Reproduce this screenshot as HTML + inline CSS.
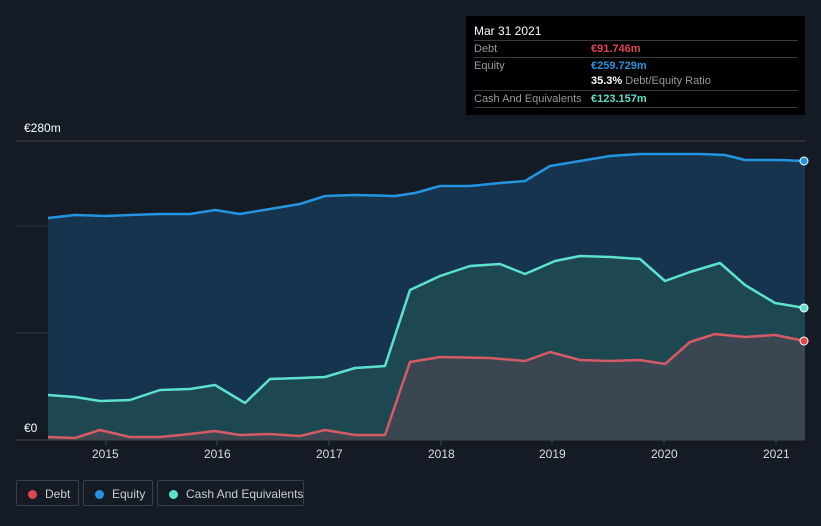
<!DOCTYPE html>
<html><head><meta charset="utf-8"><style>
body{margin:0;background:#151b24;width:821px;height:526px;overflow:hidden;font-family:"Liberation Sans",sans-serif;}
.tt{position:absolute;left:466px;top:16px;width:339px;height:99px;background:#000;color:#fff;font-size:11px;}
.tt .h{position:absolute;left:8px;top:8px;font-size:12px;}
.row{position:absolute;left:8px;width:324px;border-top:1px solid #3a3a3a;height:16px;line-height:17px;color:#999;white-space:nowrap;}
.row span{position:absolute;left:117px;font-weight:bold;}
.leg{position:absolute;top:480px;height:26px;border:1px solid #3a404a;border-radius:2px;color:#ccc;font-size:12px;line-height:26px;box-sizing:border-box;white-space:nowrap;}
.leg i{position:absolute;left:11px;top:9px;width:9px;height:9px;border-radius:50%;}
.leg b{font-weight:normal;position:absolute;left:28px;}
.lbl{position:absolute;color:#fff;font-size:12px;}
</style></head><body>
<svg width="821" height="526" style="position:absolute;left:0;top:0">
<line x1="16" y1="141" x2="805" y2="141" stroke="#444" />
<line x1="16" y1="226" x2="805" y2="226" stroke="#2a3340" />
<line x1="16" y1="333" x2="805" y2="333" stroke="#2a3340" />
<polygon fill="#17344f" points="48,218 75,215 105,216 130,215 160,214 190,214 215,210 240,214 270,209 300,204 325,196 355,195 395,196 415,193 440,186 470,186 500,183 525,181 550,166 580,161 610,156 640,154 700,154 725,155 745,160 780,160 805,161 805,440 48,440"/>
<polygon fill="#1e4a52" opacity="0.9" points="48,395 75,397 100,401 130,400 160,390 190,389 215,385 245,403 270,379 300,378 325,377 355,368 385,366 410,290 440,276 470,266 500,264 525,274 555,261 580,256 610,257 640,259 665,281 690,272 720,263 745,285 775,303 805,308 805,440 48,440"/>
<polygon fill="#3c4852" opacity="0.95" points="48,437 75,438 100,430 130,437 160,437 190,434 215,431 240,435 270,434 300,436 325,430 355,435 385,435 410,362 440,357 490,358 525,361 550,352 580,360 610,361 640,360 665,364 690,342 715,334 745,337 775,335 805,341 805,440 48,440"/>
<polyline fill="none" stroke="#2394df" stroke-width="2.5" stroke-linejoin="round" points="48,218 75,215 105,216 130,215 160,214 190,214 215,210 240,214 270,209 300,204 325,196 355,195 395,196 415,193 440,186 470,186 500,183 525,181 550,166 580,161 610,156 640,154 700,154 725,155 745,160 780,160 805,161"/>
<polyline fill="none" stroke="#5ce0cf" stroke-width="2.5" stroke-linejoin="round" points="48,395 75,397 100,401 130,400 160,390 190,389 215,385 245,403 270,379 300,378 325,377 355,368 385,366 410,290 440,276 470,266 500,264 525,274 555,261 580,256 610,257 640,259 665,281 690,272 720,263 745,285 775,303 805,308"/>
<polyline fill="none" stroke="#d45a64" stroke-width="2.5" stroke-linejoin="round" points="48,437 75,438 100,430 130,437 160,437 190,434 215,431 240,435 270,434 300,436 325,430 355,435 385,435 410,362 440,357 490,358 525,361 550,352 580,360 610,361 640,360 665,364 690,342 715,334 745,337 775,335 805,341"/>
<line x1="16" y1="440" x2="805" y2="440" stroke="#444"/>
<g stroke="#444"><line x1="106" y1="440" x2="106" y2="445"/><line x1="217" y1="440" x2="217" y2="445"/><line x1="329" y1="440" x2="329" y2="445"/><line x1="441" y1="440" x2="441" y2="445"/><line x1="552" y1="440" x2="552" y2="445"/><line x1="664" y1="440" x2="664" y2="445"/><line x1="776" y1="440" x2="776" y2="445"/></g>
<circle cx="804" cy="161" r="4" fill="#2394df" stroke="#fff" stroke-width="1"/>
<circle cx="804" cy="308" r="4" fill="#5ce0cf" stroke="#fff" stroke-width="1"/>
<circle cx="804" cy="341" r="4" fill="#e0454f" stroke="#fff" stroke-width="1"/>
</svg>
<div class="lbl" style="left:24px;top:121px">€280m</div>
<div class="lbl" style="left:24px;top:421px">€0</div>
<div class="lbl" style="left:92px;top:447px;color:#ddd">2015</div>
<div class="lbl" style="left:204px;top:447px;color:#ddd">2016</div>
<div class="lbl" style="left:316px;top:447px;color:#ddd">2017</div>
<div class="lbl" style="left:428px;top:447px;color:#ddd">2018</div>
<div class="lbl" style="left:539px;top:447px;color:#ddd">2019</div>
<div class="lbl" style="left:651px;top:447px;color:#ddd">2020</div>
<div class="lbl" style="left:763px;top:447px;color:#ddd">2021</div>
<div class="tt"><div class="h">Mar 31 2021</div>
<div class="row" style="top:24px">Debt<span style="color:#e0454f">€91.746m</span></div>
<div class="row" style="top:41px">Equity<span style="color:#2394df">€259.729m</span></div>
<div class="row" style="top:57px;border-top:none"><span style="color:#fff">35.3% <em style="font-style:normal;font-weight:normal;color:#999">Debt/Equity Ratio</em></span></div>
<div class="row" style="top:74px">Cash And Equivalents<span style="color:#5ce0cf">€123.157m</span></div>
<div class="row" style="top:91px;height:0"></div>
</div>
<div class="leg" style="left:16px;width:63px"><i style="background:#e0454f"></i><b>Debt</b></div>
<div class="leg" style="left:83px;width:70px"><i style="background:#2394df"></i><b>Equity</b></div>
<div class="leg" style="left:157px;width:147px"><i style="background:#5ce0cf"></i><b>Cash And Equivalents</b></div>
</body></html>
